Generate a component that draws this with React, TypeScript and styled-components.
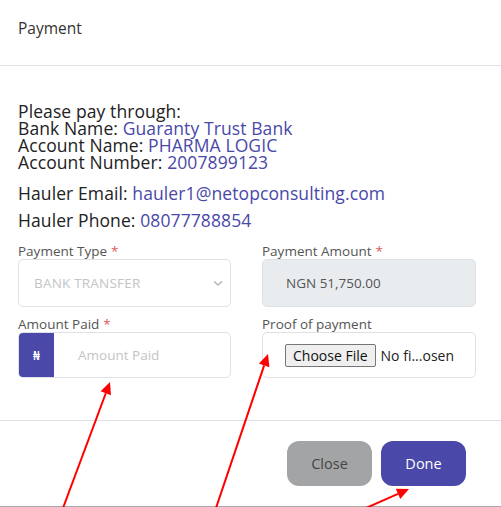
import styled, { createGlobalStyle } from "styled-components";

const GlobalStyle = createGlobalStyle`
  html, body {
    margin: 0;
    padding: 0;
    background: #ffffff;
  }
  body {
    font-family: "Open Sans", "Noto Sans", sans-serif;
    color: #212529;
  }
`;

const accent = "#4a48a8";

const Modal = styled.div`
  position: relative;
  width: 501px;
  height: 507px;
  box-sizing: border-box;
  overflow: hidden;
  background: #fff;
`;

const Header = styled.div`
  height: 66px;
  box-sizing: border-box;
  padding: 0 18px 10px;
  display: flex;
  align-items: center;
  border-bottom: 1px solid #dee2e6;
  font-size: 15.5px;
  font-weight: 500;
  color: #333;
`;

const Body = styled.div`
  padding: 37px 25px 0 18px;
  height: 354px;
  box-sizing: border-box;
`;

const Info = styled.div`
  font-size: 17.5px;
  line-height: 17px;
  color: #222;
  letter-spacing: 0.1px;
`;

const InfoLine = styled.div<{ $gap?: number }>`
  margin-top: ${(p) => p.$gap ?? 0}px;
`;

const Value = styled.span`
  color: ${accent};
`;

const FormGrid = styled.div`
  margin-top: 14px;
  display: grid;
  grid-template-columns: 213px 214px;
  column-gap: 31px;
  row-gap: 9px;
`;

const Field = styled.div`
  display: flex;
  flex-direction: column;
`;

const Label = styled.label`
  font-size: 13.5px;
  line-height: 16px;
  color: #555;
`;

const Req = styled.span`
  color: #e05555;
  margin-left: 4px;
`;

const Box = styled.div<{ $h: number; $disabled?: boolean }>`
  height: ${(p) => p.$h}px;
  box-sizing: border-box;
  border: 1px solid #dee2e6;
  border-radius: 5px;
  background: ${(p) => (p.$disabled ? "#e9ecef" : "#fff")};
  display: flex;
  align-items: center;
  font-size: 13.5px;
  overflow: hidden;
`;

const SelectText = styled.span`
  flex: 1;
  padding-left: 15px;
  color: #c4c4c4;
  letter-spacing: 0.2px;
`;

const Chevron = styled.svg`
  width: 12px;
  height: 12px;
  margin-right: 6px;
`;

const AmountText = styled.span`
  padding-left: 23px;
  color: #555;
`;

const Addon = styled.div`
  width: 35px;
  align-self: stretch;
  background: ${accent};
  color: #fff;
  display: flex;
  align-items: center;
  justify-content: center;
  font-size: 12px;
  font-weight: 600;
`;

const Placeholder = styled.span`
  padding-left: 24px;
  color: #c4c4c4;
`;

const FileButton = styled.span`
  margin-left: 22px;
  border: 1px solid #767676;
  border-radius: 2px;
  background: #efefef;
  padding: 1px 7px;
  font-size: 14px;
  color: #111;
`;

const FileName = styled.span`
  margin-left: 5px;
  font-size: 14px;
  color: #222;
`;

const Footer = styled.div`
  height: 87px;
  box-sizing: border-box;
  border-top: 1px solid #dee2e6;
  border-bottom: 1px solid #a8a8a8;
  display: flex;
  justify-content: flex-end;
  align-items: flex-start;
  gap: 9px;
  padding: 20px 35px 0 0;
`;

const Button = styled.button<{ $primary?: boolean }>`
  width: 85px;
  height: 45px;
  border: none;
  border-radius: 12px;
  font-family: inherit;
  font-size: 14.5px;
  background: ${(p) => (p.$primary ? accent : "#a3a4a6")};
  color: ${(p) => (p.$primary ? "#fff" : "#444")};
`;

const Arrows = styled.svg`
  position: absolute;
  left: 0;
  top: 0;
  pointer-events: none;
`;

function Arrow({ x1, y1, x2, y2 }: { x1: number; y1: number; x2: number; y2: number }) {
  const a = Math.atan2(y2 - y1, x2 - x1);
  const len = 12;
  const w = 5.5;
  const bx = x2 - len * Math.cos(a);
  const by = y2 - len * Math.sin(a);
  const px = -Math.sin(a) * w;
  const py = Math.cos(a) * w;
  return (
    <g>
      <line x1={x1} y1={y1} x2={bx} y2={by} stroke="#ff0000" strokeWidth={2} />
      <polygon
        points={`${x2},${y2} ${bx + px},${by + py} ${bx - px},${by - py}`}
        fill="#ff0000"
      />
    </g>
  );
}

export default function App() {
  return (
    <Modal>
      <GlobalStyle />
      <Header>Payment</Header>
      <Body>
        <Info>
          <InfoLine>Please pay through:</InfoLine>
          <InfoLine>
            Bank Name: <Value>Guaranty Trust Bank</Value>
          </InfoLine>
          <InfoLine>
            Account Name: <Value>PHARMA LOGIC</Value>
          </InfoLine>
          <InfoLine>
            Account Number: <Value>2007899123</Value>
          </InfoLine>
          <InfoLine $gap={14}>
            Hauler Email: <Value>hauler1@netopconsulting.com</Value>
          </InfoLine>
          <InfoLine $gap={10}>
            Hauler Phone: <Value>08077788854</Value>
          </InfoLine>
        </Info>
        <FormGrid>
          <Field>
            <Label>
              Payment Type<Req>*</Req>
            </Label>
            <Box $h={48}>
              <SelectText>BANK TRANSFER</SelectText>
              <Chevron viewBox="0 0 12 12">
                <path d="M2 4.5 L6 8 L10 4.5" fill="none" stroke="#aaa" strokeWidth={1.2} />
              </Chevron>
            </Box>
          </Field>
          <Field>
            <Label>
              Payment Amount<Req>*</Req>
            </Label>
            <Box $h={48} $disabled>
              <AmountText>NGN 51,750.00</AmountText>
            </Box>
          </Field>
          <Field>
            <Label>
              Amount Paid<Req>*</Req>
            </Label>
            <Box $h={46}>
              <Addon>₦</Addon>
              <Placeholder>Amount Paid</Placeholder>
            </Box>
          </Field>
          <Field>
            <Label>Proof of payment</Label>
            <Box $h={46}>
              <FileButton>Choose File</FileButton>
              <FileName>No fi...osen</FileName>
            </Box>
          </Field>
        </FormGrid>
      </Body>
      <Footer>
        <Button>Close</Button>
        <Button $primary>Done</Button>
      </Footer>
      <Arrows width={501} height={507} viewBox="0 0 501 507">
        <Arrow x1={63} y1={508} x2={110} y2={382} />
        <Arrow x1={216} y1={508} x2={268} y2={354} />
        <Arrow x1={366} y1={508} x2={409} y2={489} />
      </Arrows>
    </Modal>
  );
}
